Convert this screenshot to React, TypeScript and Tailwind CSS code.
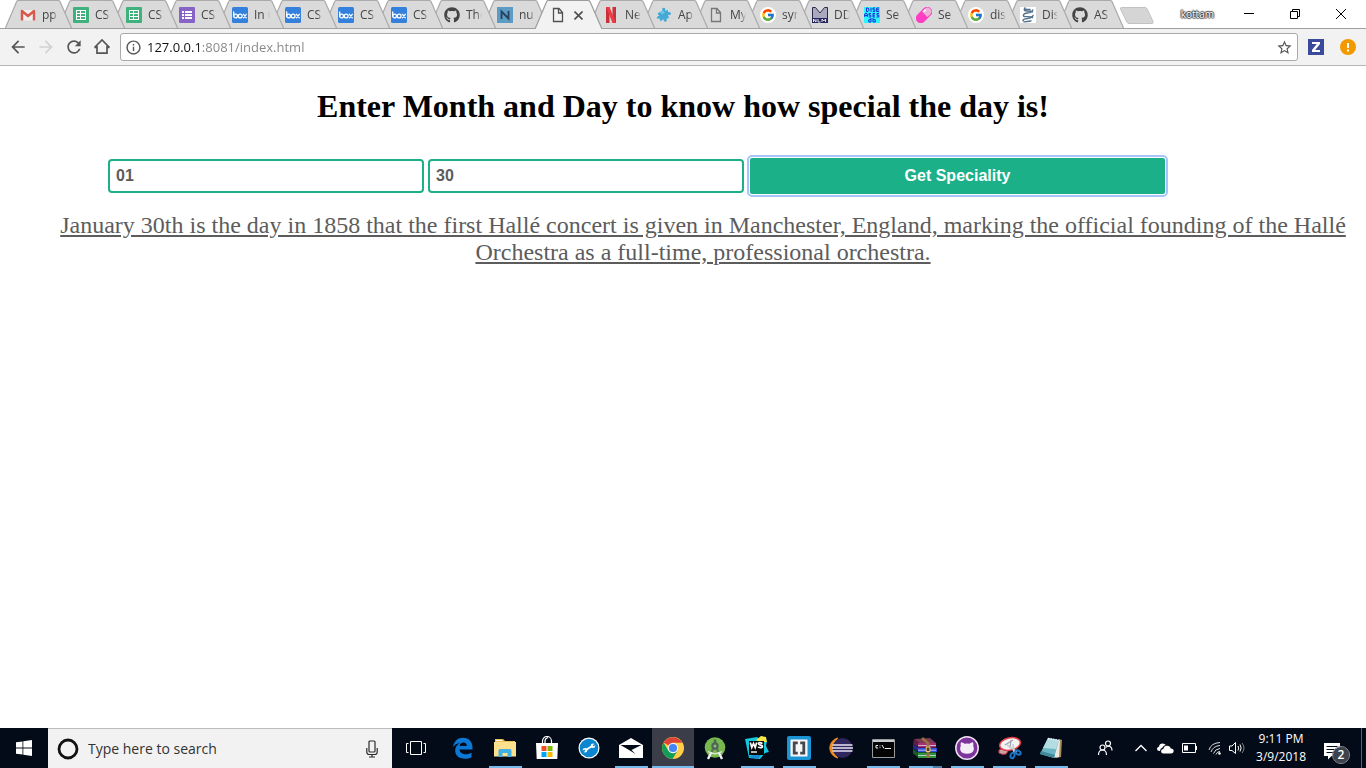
import React from "react";
import { MdArrowBack, MdArrowForward, MdRefresh, MdInfoOutline, MdStarBorder } from "react-icons/md";
import { FcGoogle } from "react-icons/fc";
import { FaGithub } from "react-icons/fa";

/* ---------- favicons ---------- */

const Gmail = () => (
  <svg width="16" height="16" viewBox="0 0 16 16">
    <path d="M1 3h14v10.500H1z" fill="#f1eeee" />
    <path d="M2 13.500V4L8 9l6-5v9.500" fill="none" stroke="#d9594c" strokeWidth="2.400" strokeLinejoin="round" />
  </svg>
);
const Sheets = () => (
  <svg width="16" height="16" viewBox="0 0 16 16">
    <rect width="16" height="16" rx="1" fill="#3fb17b" />
    <path d="M3 3h10v10H3z" fill="#fff" />
    <path d="M4 4h3v2H4zM8 4h4v2H8zM4 7h3v2H4zM8 7h4v2H8zM4 10h3v2H4zM8 10h4v2H8z" fill="#3fb17b" />
  </svg>
);
const Forms = () => (
  <svg width="16" height="16" viewBox="0 0 16 16">
    <rect width="16" height="16" rx="1" fill="#8763c5" />
    <path d="M3 4h2v2H3zM6 4h7v2H6zM3 7h2v2H3zM6 7h7v2H6zM3 10h2v2H3zM6 10h7v2H6z" fill="#fff" />
  </svg>
);
const Box = () => (
  <svg width="16" height="16" viewBox="0 0 16 16" fill="none" stroke="#fff" strokeWidth="1.300" strokeLinecap="round">
    <rect width="16" height="16" rx="1.500" fill="#3480dd" stroke="none" />
    <path d="M1.700 5v4" />
    <circle cx="3.600" cy="9" r="1.900" />
    <circle cx="8.200" cy="9" r="1.900" />
    <path d="M11.500 7.300l2.800 3.500M14.300 7.300l-2.800 3.500" />
  </svg>
);
const Github = () => <FaGithub size={16} color="#444444" />;
const Numbers = () => (
  <svg width="16" height="16" viewBox="0 0 16 16">
    <rect width="16" height="16" fill="#5b9bc4" />
    <path d="M4.500 12V4.500L11.500 11.500V4" fill="none" stroke="#27405c" strokeWidth="1.800" />
  </svg>
);
const PageIcon = ({ color = "#777777" }: { color?: string }) => (
  <svg width="16" height="16" viewBox="0 0 16 16" fill="none" stroke={color} strokeWidth="1.300">
    <path d="M3.500 1.500h5.500l3.500 4v9h-9zM8.500 1.500v4.500h4" />
  </svg>
);
const Netflix = () => (
  <svg width="16" height="16" viewBox="0 0 16 16">
    <path d="M3 0h3.500v16H3zM9.500 0H13v16H9.500z" fill="#c8303a" />
    <path d="M3 0h3.500L13 16H9.500z" fill="#ee3a42" />
  </svg>
);
const Puzzle = () => (
  <svg width="16" height="16" viewBox="0 0 16 16">
    <path d="M6.500 3.500C5 1 8 0 9 1.200c.8 1-.5 2 .3 2.600l2.200-1 .8 2.500c1.500-.8 3.200.5 2.500 2-.7 1.300-2 .2-2.900 1l1.200 2.700-2.800.8c1 1.400.5 3-.9 3-1.600 0-1.400-1.500-2-2.500l-2.800 2-1.300-3C1.600 12.400.2 11.200 1 10c.8-1.200 2-.2 2.200-1.200L1.500 6.500z" fill="#43a9d6" />
    <path d="M4 5l3-1 2 1.500-3 2z" fill="#75c9e8" />
  </svg>
);
const Google = () => (
  <span className="flex size-4 items-center justify-center rounded-full bg-white">
    <FcGoogle size={14} />
  </span>
);
const Nlm = () => (
  <svg width="16" height="16" viewBox="0 0 16 16">
    <path d="M.5.500h3L8 6l4.500-5.500h3v15H.5z" fill="#aaa8bf" stroke="#2c2b4b" />
    <path d="M0 11h16v5H0z" fill="#25235c" />
    <path d="M1.500 15v-3l2.500 3v-3M6 12v3h2.500M10 15v-3l1.800 2 1.800-2v3" fill="none" stroke="#fff" strokeWidth=".9" />
  </svg>
);
const DiseasesDb = () => (
  <svg width="16" height="16" viewBox="0 0 16 16">
    <rect width="16" height="16" fill="#2ef5fb" />
    <g fill="none" stroke="#1d2bd8" strokeWidth="1">
      <path d="M2.500 1v3.500h1.500l.8-1V2L4 1zM7 .800v4M11 1H9v1.800h1.800v1.700H8.800M15 1h-2.300v3.500H15M12.700 2.800H15" />
      <path d="M.7 10V7L2 6l1.300 1v3M.7 8.500h2.600M7 6.500H5v1.700h1.800V10H4.800M11 6.500H9V10h2M9 8.200h2M15 6.500h-2v1.700h1.800V10H12.500" />
      <path d="M7 11v4H4.800v-2.300H7M9 11v4h2.300v-2.300H9" />
    </g>
  </svg>
);
const Pill = () => (
  <svg width="16" height="16" viewBox="0 0 16 16">
    <g transform="rotate(-45 8 8)">
      <rect x="-1.500" y="3" width="19" height="10" rx="5" fill="#ff3ec4" />
      <path d="M9 4.200h4a3.800 3.800 0 0 1 0 7.600H9z" fill="#e9b3d6" />
      <path d="M10 5.500h3" stroke="#fff" strokeWidth="1.500" />
    </g>
  </svg>
);
const Dna = () => (
  <svg width="16" height="16" viewBox="0 0 16 16" fill="none" stroke="#53708c" strokeWidth="1.400" strokeLinecap="round">
    <rect width="16" height="16" fill="#fff" stroke="none" />
    <path d="M5 .800C3.500 3 4.500 4 7 4c3 0 5 .2 5.500 1M12.800 3C12.500 5 10 5.800 7.500 6S3.500 7 3.300 8.500C3.300 9.800 5 9.600 7.500 9.600s4.800 0 5 .9" />
    <path d="M13 8.500c-.5 2-3 2.700-5.500 3S3 12.500 3 13.700M4 14.800c2-.6 6 .2 7-1M4.500 2c2 .8 4 0 5.500.5" />
  </svg>
);

type TabData = { title: string; Icon: () => React.JSX.Element; active?: boolean };

const tabs: TabData[] = [
  { title: "pp", Icon: Gmail },
  { title: "CS", Icon: Sheets },
  { title: "CS", Icon: Sheets },
  { title: "CS", Icon: Forms },
  { title: "In C", Icon: Box },
  { title: "CS", Icon: Box },
  { title: "CS", Icon: Box },
  { title: "CS", Icon: Box },
  { title: "The", Icon: Github },
  { title: "nu", Icon: Numbers },
  { title: "", Icon: () => <PageIcon color="#505050" />, active: true },
  { title: "Ne", Icon: Netflix },
  { title: "Ap", Icon: Puzzle },
  { title: "My", Icon: () => <PageIcon /> },
  { title: "syn", Icon: Google },
  { title: "DD", Icon: Nlm },
  { title: "Se", Icon: DiseasesDb },
  { title: "Se", Icon: Pill },
  { title: "dis", Icon: Google },
  { title: "Dis", Icon: Dna },
  { title: "AS", Icon: Github },
];

function Tab({ tab, index }: { tab: TabData; index: number }) {
  const { Icon, title, active } = tab;
  return (
    <div
      className={`relative h-7 shrink-0 ${index < 12 ? "w-[53px]" : "w-[52px]"}`}
      style={{ zIndex: active ? 40 : 30 - index }}
    >
      <svg className="absolute top-0 left-0" width="67" height="29" viewBox="0 0 67 29">
        <path
          d="M0 29L11.500 2Q12.200.500 13.500.500H53Q54.500.500 55.200 2L67 29"
          fill={active ? "#f2f2f2" : "#dadada"}
          stroke={active ? "#9c9c9c" : "#aaaaaa"}
          strokeWidth="1.200"
        />
        {!active && <path d="M0 28.500H67" stroke="#a0a0a0" />}
      </svg>
      <div className="relative flex h-full items-center gap-2 pt-0.5 pl-[15px]">
        <button className="flex items-center gap-1.5">
          <span className="size-4 shrink-0">
            <Icon />
          </span>
          {!active && (
            <span className="w-4 overflow-hidden [mask-image:linear-gradient(to_right,black_65%,transparent)] text-left text-xs leading-4 whitespace-nowrap text-[#444]">
              {title}
            </span>
          )}
        </button>
        {active && (
          <button aria-label="Close tab" className="shrink-0">
            <svg width="9" height="9" viewBox="0 0 9 9" stroke="#4f4f4f" strokeWidth="1.600">
              <path d="M.5.500l8 8M8.500.500l-8 8" />
            </svg>
          </button>
        )}
      </div>
    </div>
  );
}

function TabStrip() {
  return (
    <div className="flex h-[29px] items-start border-b border-[#a0a0a0] bg-white pl-[5px]">
      {tabs.map((tab, i) => (
        <Tab key={i} tab={tab} index={i} />
      ))}
      <button aria-label="New tab" className="mt-[7px] ml-[10px]">
        <svg width="36" height="17" viewBox="0 0 36 17">
          <path d="M2.500.500H26q1.500 0 2.200 1.500L34 14.500q.6 2-1 2H10q-1.500 0-2.200-1.500L1.500 2Q1 .500 2.500.500z" fill="#d5d5d5" stroke="#c2c2c2" />
        </svg>
      </button>
      <div className="ml-auto flex h-7 items-center pr-0.5">
        <button className="mr-3 text-[10px] leading-4 text-white [text-shadow:1px_0_1px_#333,-1px_0_1px_#333,0_1px_1px_#333,0_-1px_1px_#333]">
          kottam
        </button>
        <button aria-label="Minimize" className="flex w-[46px] justify-center">
          <svg width="10" height="10" stroke="#000"><path d="M0 4.500h10" /></svg>
        </button>
        <button aria-label="Restore" className="flex w-[46px] justify-center">
          <svg width="10" height="10" fill="none" stroke="#000"><path d="M.5 2.500h7v7h-7zM2.500 2.500v-2h7v7h-2" /></svg>
        </button>
        <button aria-label="Close" className="flex w-[46px] justify-center">
          <svg width="10" height="10" stroke="#000"><path d="M0 0l10 10M10 0L0 10" /></svg>
        </button>
      </div>
    </div>
  );
}

function Toolbar() {
  return (
    <div className="flex h-[37px] items-center border-b border-[#b6b6b6] bg-[#f2f2f2] pl-2 text-[#555]">
      <button aria-label="Back"><MdArrowBack size={20} /></button>
      <button aria-label="Forward" className="ml-2 text-[#d2d2d2]"><MdArrowForward size={20} /></button>
      <button aria-label="Reload" className="ml-2"><MdRefresh size={20} /></button>
      <button aria-label="Home" className="ml-2">
        <svg width="20" height="20" viewBox="0 0 20 20" fill="none" stroke="currentColor" strokeWidth="1.700">
          <path d="M2.500 10.500L10 3l7.500 7.500M5 9v7.200h10V9M2.500 10.300H5M15 10.300h2.500" />
        </svg>
      </button>
      <div className="ml-2 flex h-7 flex-1 items-center rounded-[3px] border border-[#a9a9a9] bg-white px-1">
        <MdInfoOutline size={17} />
        <label htmlFor="address" className="sr-only">Address</label>
        <input
          id="address"
          defaultValue="127.0.0.1:8081/index.html"
          className="ml-[5px] h-5 min-w-0 flex-1 bg-[linear-gradient(to_right,#111_55px,#858585_55px)] bg-clip-text text-[13px] leading-5 text-transparent caret-black outline-none"
        />
        <button aria-label="Bookmark this page"><MdStarBorder size={17} /></button>
      </div>
      <button aria-label="Z extension" className="ml-[10px]">
        <svg width="16" height="16" viewBox="0 0 16 16">
          <rect width="16" height="16" fill="#3c4a9b" />
          <path d="M4 3h8v2l-4.800 6H12v2H4v-2l4.800-6H4z" fill="#fff" />
        </svg>
      </button>
      <button aria-label="Update browser" className="mr-[10px] ml-4">
        <svg width="16" height="16" viewBox="0 0 16 16">
          <circle cx="8" cy="8" r="8" fill="#f29900" />
          <path d="M8 4v5M8 10.500v2" stroke="#fff" strokeWidth="2" />
        </svg>
      </button>
    </div>
  );
}

function Page() {
  return (
    <main className="flex-1 bg-white px-2 pt-[22px] font-['Liberation_Serif',serif]">
      <h1 className="text-center text-[32px] leading-9 font-bold text-black">
        Enter Month and Day to know how special the day is!
      </h1>
      <form
        className="mt-[34px] grid grid-cols-[316fr_316fr_417fr] items-center gap-x-1 pr-[193px] pl-[100px] font-['Liberation_Sans',sans-serif] text-base font-bold"
        onSubmit={(e) => e.preventDefault()}
      >
        <input aria-label="Month" defaultValue="01" className="h-[34px] min-w-0 rounded border-2 border-[#1cb088] px-1.5 text-[#5c5c5c]" />
        <input aria-label="Day" defaultValue="30" className="h-[34px] min-w-0 rounded border-2 border-[#1cb088] px-1.5 text-[#5c5c5c]" />
        <button className="ml-0.5 h-9 rounded-xs bg-[#1cb088] text-white outline-2 outline-offset-1 outline-[#a6c5fb]">
          Get Speciality
        </button>
      </form>
      <p className="mt-[18px] ml-10 text-center text-2xl leading-[27px] text-[#5c5c5c] underline">
        January 30th is the day in 1858 that the first Hallé concert is given in Manchester, England, marking the
        official founding of the Hallé Orchestra as a full-time, professional orchestra.
      </p>
    </main>
  );
}

/* ---------- taskbar icons ---------- */

const Edge = () => (
  <svg width="22" height="22" viewBox="0 0 22 22">
    <path d="M1 10C2 4 6 .800 11 .800c6 0 9.500 4.200 9.500 9.700v2H7.500c.2 3.200 3 4.700 6.200 4.700 2.300 0 4.200-.6 5.800-1.500v4.500c-2 1-4.200 1.500-6.600 1.500C7 21.700 3.200 18.500 3.200 13.500c0-3.600 2-6.200 5-7.600C4.800 6.300 2.500 7.800 1 10zm6.600-1h7.200c0-2-1.200-3.500-3.400-3.500C9.300 5.500 8 7 7.600 9z" fill="#0a78d6" />
  </svg>
);
const Folder = () => (
  <svg width="22" height="20" viewBox="0 0 22 20">
    <path d="M1 1h8l2 2h10v15H1z" fill="#e9c155" />
    <path d="M0 4h22v14.500H0z" fill="#fbe08d" />
    <path d="M4.500 19v-6.500q0-1.500 1.500-1.500h10q1.500 0 1.500 1.500V19h-4v-4h-5v4z" fill="#41b0e4" />
    <path d="M2 2.500h6" stroke="#fff" />
  </svg>
);
const Store = () => (
  <svg width="24" height="24" viewBox="0 0 24 24">
    <path d="M7.500 7V5a4.500 4.500 0 0 1 9 0v2M10 7V5q0-2.500 3-3.500" fill="none" stroke="#fff" strokeWidth="1.200" />
    <path d="M1 7h22l-.7 16H1.700z" fill="#fff" />
    <path d="M6.500 10h5v5h-5z" fill="#f25022" />
    <path d="M12.500 10h5v5h-5z" fill="#7fba00" />
    <path d="M6.500 16h5v5h-5z" fill="#00a4ef" />
    <path d="M12.500 16h5v5h-5z" fill="#ffb900" />
  </svg>
);
const Wrench = () => (
  <svg width="22" height="22" viewBox="0 0 22 22">
    <circle cx="11" cy="11" r="10.500" fill="#fff" />
    <circle cx="11" cy="11" r="9.300" fill="#0c86cf" />
    <path d="M7 13.500l8-5" stroke="#fff" strokeWidth="2" />
    <circle cx="7" cy="13.200" r="2.300" fill="#fff" />
    <circle cx="15" cy="8.800" r="2.300" fill="#fff" />
    <path d="M4 14.800l3-1.500M15 8.600l3-1.500" stroke="#0c86cf" strokeWidth="1.600" />
  </svg>
);
const Mail = () => (
  <svg width="24" height="20" viewBox="0 0 24 20">
    <path d="M0 7L12 0l12 7v13H0z" fill="#fff" />
    <path d="M1.500 7h21L12.500 12l4 4L10 12z" fill="#030a17" />
  </svg>
);
const Chrome = () => (
  <svg width="22" height="22" viewBox="0 0 22 22">
    <circle cx="11" cy="11" r="11" fill="#ffcd46" />
    <path d="M11 11L1.500 5.500A11 11 0 0 1 20.500 5.700H11z" fill="#db4437" />
    <path d="M1.500 5.500A11 11 0 0 0 10.500 22L15.600 13.700 11 16.200 6.300 13.700z" fill="#0f9d58" />
    <circle cx="11" cy="11" r="5.200" fill="#f4f4f4" />
    <circle cx="11" cy="11" r="4.100" fill="#4285f4" />
  </svg>
);
const AndroidStudio = () => (
  <svg width="22" height="23" viewBox="0 0 22 23">
    <circle cx="11" cy="10.500" r="10.300" fill="#78b94f" />
    <path d="M11 2.500v4" stroke="#4c6b4d" strokeWidth="2.600" />
    <path d="M9.500 11L5.500 19M12.500 11l4 8" stroke="#5b7a55" strokeWidth="2.600" />
    <path d="M7.500 15L4 22M14.500 15l3.500 7" stroke="#f3f3f3" strokeWidth="2.400" />
    <path d="M4 14.500q7 4.500 14 0" fill="none" stroke="#dfe9da" strokeWidth="1.400" />
    <circle cx="11" cy="9" r="3.700" fill="#4f6458" />
    <circle cx="11" cy="9" r="1.500" fill="#91bd7c" />
  </svg>
);
const WebStorm = () => (
  <svg width="24" height="24" viewBox="0 0 24 24">
    <path d="M0 3l12-2 4 3 6 1-1 5 3 6-4 1-5 6-11-1z" fill="#12c9df" />
    <path d="M11 4l5-4 5 1 1 5h-8z" fill="#f7e64b" />
    <path d="M3 21l10 2 6-8z" fill="#168bd2" />
    <path d="M4 5h15v14H4z" fill="#080808" />
    <path d="M5.300 6.500l1.500 5 1.700-4 1.700 4 1.500-5M17.500 7.500q-4-2-4 .2c0 1.800 4 1 4 2.700 0 2-4 1.200-4.300.3" fill="none" stroke="#fff" strokeWidth="1.700" />
    <path d="M6 16h6" stroke="#fff" strokeWidth="1.400" />
  </svg>
);
const Brackets = () => (
  <svg width="24" height="24" viewBox="0 0 24 24">
    <rect width="24" height="24" rx="2" fill="#1b94d5" />
    <path d="M3.500 3.500h17v17h-17z" fill="#f7f7f7" />
    <path d="M10.800 6.800H7.200v10.400h3.600M13.200 6.800h3.600v10.400h-3.600" fill="none" stroke="#45494f" strokeWidth="2.800" />
  </svg>
);
const Eclipse = () => (
  <svg width="24" height="22" viewBox="0 0 24 22">
    <path d="M9 1A10.200 10.200 0 0 0 9 21 13 13 0 0 1 9 1z" fill="#f08b1e" stroke="#f08b1e" />
    <circle cx="13.500" cy="11" r="10" fill="#30265e" />
    <path d="M3.500 8h20M3 11h21M3.500 14h20" stroke="#e5e3f2" strokeWidth="1.500" />
  </svg>
);
const Cmd = () => (
  <svg width="23" height="19" viewBox="0 0 23 19">
    <path d="M.5.500h22v18H.5z" fill="#050505" stroke="#9a9a9a" />
    <path d="M1 1h21v2H1z" fill="#c9ccd0" />
    <path d="M6 6.500H4v2.500h2M8 6.500v.8M8 8.300v.8M10 6l2 3.500M13 9.500h6" fill="none" stroke="#f1f1f1" />
  </svg>
);
const WinRar = () => (
  <svg width="24" height="22" viewBox="0 0 24 22">
    <path d="M1 2l16-1 6 5H6z" fill="#7c3a52" />
    <path d="M1 2l5 4v4.500L0 7z" fill="#5f1f45" />
    <path d="M5 6h18v4.500H5z" fill="#a62c7c" />
    <path d="M0 7l6 4v4L0 11.500z" fill="#242b80" />
    <path d="M5 11h19v4H5z" fill="#2f4bd8" />
    <path d="M0 12l6 4v5L0 16.500z" fill="#185a26" />
    <path d="M5 15.500h18V21H5z" fill="#2f9440" />
    <path d="M5 8.500h18M5 13.200h18M5 18.500h18" stroke="#e3dfe6" strokeWidth="1" opacity=".75" />
    <path d="M9 1.200l6 5V21" fill="none" stroke="#9a7042" strokeWidth="2.800" />
    <path d="M13.200 10h3.800v4.500h-3.800z" fill="#5c4220" stroke="#edcb78" />
  </svg>
);
const GithubDesktop = () => (
  <svg width="24" height="24" viewBox="0 0 24 24">
    <circle cx="12" cy="12" r="11.200" fill="#7d359e" stroke="#eee1f3" strokeWidth="1.500" />
    <path d="M6 6.200q2 .1 3.600 1.500 2.400-.5 4.800 0Q16 6.300 18 6.200q.8 2 .2 3.700 1.500 2.200.3 4.800-1.500 3-6.500 3t-6.500-3q-1.200-2.600.3-4.800Q5.200 8.200 6 6.200z" fill="#f4eff7" />
  </svg>
);
const Snip = () => (
  <svg width="25" height="24" viewBox="0 0 25 24">
    <path d="M2 14q3-2 9 1l-2 3q-4 1-7-1z" fill="#c9a3a6" stroke="#c93b43" />
    <ellipse cx="13" cy="8" rx="10.500" ry="6.200" transform="rotate(-12 13 8)" fill="#f3f3f4" stroke="#e43d45" strokeWidth="1.500" />
    <path d="M8 9l8-5M14 4l-1 8" stroke="#9fa5aa" strokeWidth="1.300" />
    <path d="M10 9l10 7M16 8l1 9" stroke="#c5ccd2" strokeWidth="1.600" />
    <g fill="none" stroke="#1975c8" strokeWidth="2">
      <ellipse cx="15.500" cy="19.500" rx="1.900" ry="2.800" transform="rotate(20 15.500 19.500)" />
      <ellipse cx="21" cy="16.500" rx="2.800" ry="1.900" transform="rotate(30 21 16.500)" />
    </g>
  </svg>
);
const Notepad = () => (
  <svg width="24" height="23" viewBox="0 0 24 23">
    <path d="M20 2l3 1-1 17-5 1z" fill="#a78c59" />
    <path d="M18 3l3 1-1 16-6 1z" fill="#ece9e0" />
    <path d="M9 1l11 2-5 18L1 17z" fill="#6cb5c4" />
    <path d="M9 1l11 2-3 9-13-1z" fill="#b4dde3" />
    <path d="M1 17l14 4 1-3-14-4z" fill="#418a9c" />
    <path d="M9 1.500l12 2" stroke="#eee" strokeWidth="1.500" strokeDasharray="1.500 1" />
  </svg>
);

const apps: { name: string; Icon: () => React.JSX.Element; state?: "open" | "active" | "grouped" }[] = [
  { name: "Edge", Icon: Edge },
  { name: "File Explorer", Icon: Folder, state: "open" },
  { name: "Store", Icon: Store },
  { name: "Support", Icon: Wrench },
  { name: "Mail", Icon: Mail, state: "open" },
  { name: "Chrome", Icon: Chrome, state: "active" },
  { name: "Android Studio", Icon: AndroidStudio },
  { name: "WebStorm", Icon: WebStorm, state: "open" },
  { name: "Brackets", Icon: Brackets, state: "open" },
  { name: "Eclipse", Icon: Eclipse },
  { name: "Command Prompt", Icon: Cmd, state: "open" },
  { name: "WinRAR", Icon: WinRar, state: "grouped" },
  { name: "GitHub Desktop", Icon: GithubDesktop, state: "open" },
  { name: "Snipping Tool", Icon: Snip, state: "open" },
  { name: "Notepad", Icon: Notepad, state: "open" },
];

function Taskbar() {
  return (
    <footer className="flex h-10 items-stretch bg-[#040b18] text-white">
      <button aria-label="Start" className="flex w-12 shrink-0 items-center justify-center">
        <svg width="16" height="16" viewBox="0 0 16 16" fill="#fff">
          <path d="M0 2.300l6.500-.9v6.200H0zM7.300 1.300L16 0v7.600H7.300zM0 8.400h6.500v6.200L0 13.700zM7.300 8.400H16V16l-8.700-1.200z" />
        </svg>
      </button>
      <div className="flex w-[344px] shrink-0 items-center border-t border-[#bdbdbd] bg-[#f2f2f2] pr-3 pl-[9px]">
        <svg width="22" height="22" viewBox="0 0 22 22">
          <circle cx="11" cy="11" r="9" fill="none" stroke="#111" strokeWidth="2.800" />
        </svg>
        <input
          aria-label="Search"
          placeholder="Type here to search"
          className="ml-[9px] w-0 flex-1 bg-transparent text-sm outline-none placeholder:text-[#333]"
        />
        <button aria-label="Voice search">
          <svg width="16" height="18" viewBox="0 0 16 18" fill="none" stroke="#2b2b2b" strokeWidth="1.200">
            <rect x="5" y="1" width="6" height="11" rx="1" />
            <path d="M2.800 8v4q0 2.500 2.500 2.500h5.400q2.500 0 2.500-2.500V8M8 14.500V17M5 17h6" />
          </svg>
        </button>
      </div>
      <button aria-label="Task view" className="mr-0.5 flex w-12 shrink-0 items-center justify-center">
        <svg width="20" height="14" viewBox="0 0 20 14" fill="none" stroke="#fff">
          <path d="M4.500.500h11v13h-11zM2.500 2.500h-2v9h2M17.500 2.500h2v9h-2" />
        </svg>
      </button>
      {apps.map(({ name, Icon, state }) => (
        <button
          key={name}
          aria-label={name}
          className={`flex w-[42px] shrink-0 flex-col items-center ${state === "active" ? "bg-[#3b3e49]" : ""}`}
        >
          <span className="flex h-[38px] items-center pt-0.5">
            <Icon />
          </span>
          {state === "open" && <span className="h-0.5 w-[33px] bg-[#76b9ed]" />}
          {state === "active" && <span className="h-0.5 w-full bg-[#76b9ed]" />}
          {state === "grouped" && (
            <span className="flex h-0.5 w-[33px]">
              <span className="w-6 bg-[#76b9ed]" />
              <span className="flex-1 bg-[#4d7fa8]" />
            </span>
          )}
        </button>
      ))}
      <div className="ml-auto flex items-center pr-1">
        <button aria-label="People">
          <svg width="16" height="16" viewBox="0 0 16 16" fill="none" stroke="#fff" strokeWidth="1.200">
            <circle cx="5.500" cy="7.500" r="2.500" />
            <path d="M1.500 15q0-5 4-5t4 5" />
            <circle cx="11" cy="3.500" r="2.500" />
            <path d="M9 7.500q1-1.500 2.500-1.500Q15 6.500 15 10.500" />
          </svg>
        </button>
        <button aria-label="Show hidden icons" className="ml-[22px]">
          <svg width="12" height="8" viewBox="0 0 12 8" fill="none" stroke="#fff" strokeWidth="1.300"><path d="M.5 7L6 1.500 11.500 7" /></svg>
        </button>
        <button aria-label="OneDrive" className="ml-[10px]">
          <svg width="17" height="11" viewBox="0 0 17 11" fill="#fff">
            <path d="M3 8Q0 8 0 5.800 0 4 2 3.700 2.500.500 5.500.500 7.800.500 8.800 2 6.500 2 5.500 4.600 3.200 5.200 3 8z" />
            <path d="M6 10.500q-2-.2-2-2.200t2.500-2.500q.5-3 3.500-3t3.700 2.700q3 0 3 2.600 0 2.200-2.400 2.400z" />
          </svg>
        </button>
        <button aria-label="Battery" className="ml-2">
          <svg width="16" height="10" viewBox="0 0 16 10" fill="none" stroke="#fff"><path d="M.5.500h13v9H.5zM14.500 3v4" /><path d="M2 2.500h4v5H2z" fill="#fff" stroke="none" /></svg>
        </button>
        <button aria-label="Network" className="ml-2.5">
          <svg width="14" height="14" viewBox="0 0 14 14" fill="none" stroke="#fff">
            <path d="M1 9Q3 2 12 1.500M3 11Q5 5 12 4.500M5.500 12.500Q7 8 12 7.500M8 13.500q1-3 4-3" opacity=".85" />
            <circle cx="11.500" cy="12.500" r="1.200" fill="#fff" stroke="none" />
          </svg>
        </button>
        <button aria-label="Volume" className="ml-[7px]">
          <svg width="17" height="14" viewBox="0 0 17 14" fill="none" stroke="#fff">
            <path d="M.5 5h2.500L6.500 1.500v11L3 9.500H.5zM9 5q1.200 2 0 4.500M11 3.500q2.300 3.500 0 7" />
            <path d="M13 2q4 5 0 10" opacity=".5" />
          </svg>
        </button>
        <button className="ml-2.5 text-center text-xs leading-[18px]">
          9:11 PM
          <br />
          3/9/2018
        </button>
        <button aria-label="2 notifications" className="relative mt-0.5 ml-[18px] h-7 w-[25px]">
          <svg className="mt-1" width="17" height="17" viewBox="0 0 17 17">
            <path d="M0 0h16v13H7.500L4 16.500V13H0z" fill="#fff" />
            <path d="M2.500 3.500h11M2.500 6.500h11M2.500 9.500h8" stroke="#040b18" />
          </svg>
          <span className="absolute right-0 bottom-0 flex size-4 items-center justify-center rounded-full bg-[#3e424c] text-xs leading-none font-semibold outline-1 outline-[#8a8d94]">
            2
          </span>
        </button>
        <span className="ml-3 h-10 w-px bg-[#5b606b]" />
      </div>
    </footer>
  );
}

export default function App() {
  return (
    <div className="flex min-h-screen flex-col overflow-x-hidden bg-white font-['Open_Sans','Noto_Sans',sans-serif]">
      <header>
        <TabStrip />
        <Toolbar />
      </header>
      <Page />
      <Taskbar />
    </div>
  );
}
